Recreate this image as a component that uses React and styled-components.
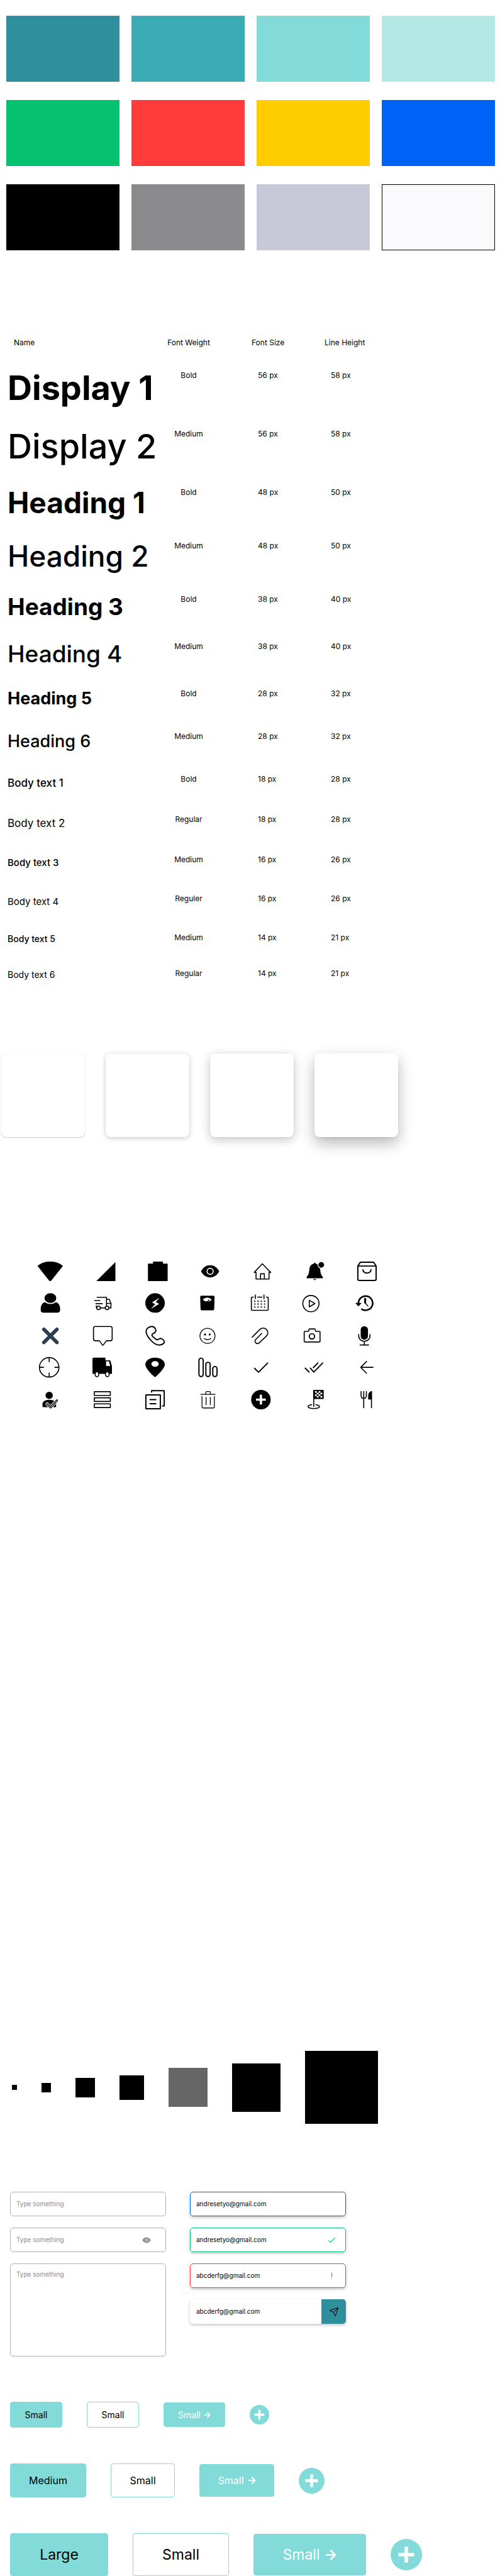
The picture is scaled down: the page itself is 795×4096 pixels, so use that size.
import React from "react";
import styled, { createGlobalStyle, css } from "styled-components";
import { Send } from "lucide-react";

const GlobalStyle = createGlobalStyle`
  *, *::before, *::after { box-sizing: border-box; }
  body {
    margin: 0;
    background: #fff;
    color: #000;
    font-family: Inter, "Liberation Sans", sans-serif;
  }
`;

const color = {
  teal: "#2f8f9d",
  mint: "#82dbd8",
  green: "#06c270",
  red: "#ff3b3b",
  blue: "#0063f7",
  grey: "#8a8a8d",
};

/* Palette */

const Palette = styled.section`
  display: grid;
  grid-template-columns: repeat(4, 1fr);
  gap: 29px 19px;
  padding: 25px 8px 0 10px;
`;

const Swatch = styled.div`
  height: 105px;
  background: ${(p) => p.$color};
  border: ${(p) => (p.$outlined ? "1px solid #000" : "none")};
`;

const swatches = [
  "#2f8f9d", "#3bacb6", "#82dbd8", "#b3e8e5",
  "#06c270", "#ff3b3b", "#ffcc00", "#0063f7",
  "#000000", "#8a8a8d", "#c7c9d9", "#fafafc",
];

/* Typography */

const TypeTable = styled.table`
  width: 100%;
  margin-top: 139px;
  table-layout: fixed;
  border-collapse: collapse;
  font-size: 12px;
  line-height: 16px;
`;

const Column = styled.col`
  width: ${(p) => p.$width}px;
`;

const TypeRow = styled.tr`
  height: ${(p) => p.$height}px;
`;

const HeadCell = styled.th`
  padding: 0 0 0 ${(p) => (p.$first ? 22 : 0)}px;
  font-weight: 400;
  text-align: ${(p) => (p.$center ? "center" : "left")};
  vertical-align: top;
`;

const NameCell = styled.th`
  padding: 0 0 0 12px;
  font-size: ${(p) => p.$size}px;
  line-height: ${(p) => p.$line}px;
  font-weight: ${(p) => p.$weight};
  text-align: left;
  vertical-align: top;
  white-space: nowrap;
`;

const Cell = styled.td`
  padding: 0 0 0 ${(p) => (p.$center ? 0 : 10)}px;
  text-align: ${(p) => (p.$center ? "center" : "left")};
  vertical-align: top;
`;

const styles = [
  { name: "Display 1", label: "Bold", px: 56, lh: 58, weight: 700, size: 54, line: 56, row: 93 },
  { name: "Display 2", label: "Medium", px: 56, lh: 58, weight: 500, size: 54, line: 56, row: 93 },
  { name: "Heading 1", label: "Bold", px: 48, lh: 50, weight: 700, size: 46, line: 48, row: 85 },
  { name: "Heading 2", label: "Medium", px: 48, lh: 50, weight: 500, size: 46, line: 48, row: 85 },
  { name: "Heading 3", label: "Bold", px: 38, lh: 40, weight: 700, size: 37, line: 39, row: 75 },
  { name: "Heading 4", label: "Medium", px: 38, lh: 40, weight: 500, size: 37, line: 39, row: 75 },
  { name: "Heading 5", label: "Bold", px: 28, lh: 32, weight: 700, size: 27, line: 31, row: 68 },
  { name: "Heading 6", label: "Medium", px: 28, lh: 32, weight: 500, size: 27, line: 31, row: 68 },
  { name: "Body text 1", label: "Bold", px: 18, lh: 28, weight: 500, size: 17, line: 28, row: 64 },
  { name: "Body text 2", label: "Regular", px: 18, lh: 28, weight: 400, size: 17, line: 28, row: 64 },
  { name: "Body text 3", label: "Medium", px: 16, lh: 26, weight: 500, size: 15, line: 26, row: 62 },
  { name: "Body text 4", label: "Reguler", px: 16, lh: 26, weight: 400, size: 15, line: 26, row: 62 },
  { name: "Body text 5", label: "Medium", px: 14, lh: 21, weight: 500, size: 14, line: 20, row: 57 },
  { name: "Body text 6", label: "Regular", px: 14, lh: 21, weight: 400, size: 14, line: 20, row: 57 },
];

/* Elevation */

const Elevations = styled.section`
  display: flex;
  gap: 33px;
  margin-top: 78px;
  padding-left: 2px;
`;

const ElevationCard = styled.div`
  width: 133px;
  height: 133px;
  border-radius: 8px;
  background: #fff;
  box-shadow: ${(p) => p.$shadow};
`;

const shadows = [
  "0 0 1px rgba(0,0,0,.12), 0 1px 2px rgba(0,0,0,.2)",
  "0 0 2px rgba(0,0,0,.08), 0 2px 8px rgba(0,0,0,.2)",
  "0 0 2px rgba(0,0,0,.08), 0 4px 16px rgba(0,0,0,.24)",
  "0 2px 4px rgba(0,0,0,.06), 0 10px 24px rgba(0,0,0,.28)",
];

/* Icons */

const IconGrid = styled.section`
  display: grid;
  grid-template-columns: repeat(7, 31px);
  gap: 20px 53px;
  margin-top: 198px;
  padding-left: 64px;
`;

const Glyph = styled.svg.attrs((p) => ({
  viewBox: p.viewBox || "0 0 96 96",
  fill: "none",
  stroke: "currentColor",
  strokeLinecap: "round",
  strokeLinejoin: "round",
  "aria-hidden": true,
}))`
  display: block;
  width: 31px;
  height: 31px;
  overflow: visible;
  stroke-width: 5;

  .solid { fill: currentColor; stroke: none; }
  .hole { fill: #fff; stroke: none; }
`;

const checker = [
  [52, 6], [70, 6], [61, 14], [79, 14], [52, 22], [70, 22], [61, 30], [79, 30],
];

const eye = (
  <>
    <path className="solid" d="M11 48C22 28 38 18 56 18S90 28 101 48C90 68 74 78 56 78S22 68 11 48Z" />
    <circle cx="56" cy="48" r="15" stroke="#fff" />
  </>
);

const icons = [
  <path className="solid" d="M-11 25Q-15 22 -11 19C5 6 27 0 49 0S93 6 109 19Q113 22 109 25L55 93Q49 99 43 93Z" />,
  <path className="solid" d="M16 96H110V2Z" />,
  <path className="solid" d="M10 10H35V0H84V10H107V96H10Z" />,
  eye,
  <path d="M22 86V53H13L53 11L94 53H86V86ZM44 86V60H63V86" />,
  <>
    <path className="solid" d="M51 5Q55 5 55 10C70 13 78 26 78 42C79 57 82 67 91 76V82H11V76C20 67 23 57 24 42C24 26 32 13 47 10Q47 5 51 5ZM44 86H58Q57 91 51 91T44 86Z" />
    <circle className="hole" cx="83" cy="16" r="18" />
    <circle className="solid" cx="83" cy="16" r="14" />
  </>,
  <path strokeWidth="6" d="M3 22L14 5Q15 3 18 3H78Q81 3 82 5L93 22V86Q93 93 86 93H10Q3 93 3 86ZM3 22H93M28 40C31 62 65 62 68 40" />,

  <>
    <ellipse className="solid" cx="50" cy="22" rx="29" ry="24" />
    <path className="solid" d="M22 42Q34 51 50 51T78 42Q98 48 98 78Q98 94 84 94H16Q2 94 2 78Q2 48 22 42Z" />
  </>,
  <>
    <path strokeLinecap="butt" d="M18 18H66V60M6 34H35M12 49H47M66 28H80L88 48V70H79M66 48H88M36 70H60M16 58V70" />
    <circle cx="27" cy="70" r="9" />
    <circle cx="69" cy="70" r="9" />
  </>,
  <>
    <circle className="solid" cx="45" cy="46" r="48" />
    <path className="hole" d="M66 20L30 43L46 52L24 76L65 50L49 41Z" />
  </>,
  <>
    <path className="solid" d="M13 10H72Q78 10 78 16L76 76Q76 82 70 82H15Q9 82 9 76L7 16Q7 10 13 10Z" />
    <path className="hole" d="M20 29Q42 10 64 29Q58 37 52 38H32Q26 37 20 29Z" />
    <path strokeWidth="4" d="M42 40L52 30" />
  </>,
  <>
    <path strokeLinecap="butt" d="M11 17H2Q-1 17 -1 20V78Q-1 82 3 82H78Q82 82 82 78V20Q82 17 79 17H71M28 17H53M19 5V26M61 5V26" />
    <path strokeWidth="6" strokeLinecap="butt" strokeDasharray="6 10" d="M13 37H70M13 51H70M13 66H70" />
  </>,
  <>
    <circle cx="32" cy="49" r="40" />
    <path d="M24 33V65L52 49Z" />
  </>,
  <>
    <path strokeWidth="8" strokeLinecap="butt" d="M6 48A35 35 0 1 1 20 75" />
    <path className="solid" d="M-10 46H22L6 63Z" />
    <path strokeWidth="10" strokeLinecap="butt" d="M39 22V48" />
    <path strokeWidth="4" d="M41 48L53 61" />
  </>,

  <path stroke="#2d3e4e" strokeWidth="18" d="M18 18L82 82M82 18L18 82" />,
  <path d="M11 4H85Q94 4 94 13V65Q94 74 85 74H69Q65 74 63 77L51 94Q48 98 45 94L34 77Q32 74 28 74H11Q2 74 2 65V13Q2 4 11 4Z" />,
  <path strokeWidth="6" d="M30 4C16 4 -1 14 1 30C4 56 40 96 66 95C80 95 92 86 91 78C88 68 74 60 66 64Q56 72 50 67Q36 58 30 48Q28 42 36 38C48 34 52 24 46 14C42 7 38 4 30 4Z" />,
  <>
    <circle strokeWidth="4" cx="43" cy="50" r="37" />
    <circle className="solid" cx="31" cy="43" r="5" />
    <circle className="solid" cx="54" cy="43" r="5" />
    <path strokeWidth="4" d="M26 63Q43 75 60 63" />
  </>,
  <path d="M3 56L41 18A23 23 0 0 1 74 50L38 84A12 12 0 0 1 20 68L50 38" />,
  <>
    <path d="M3 28H18Q22 28 22 24V20Q22 16 26 16H50Q54 16 54 20V24Q54 28 58 28H73Q77 28 77 32V76Q77 80 73 80H3Q-1 80 -1 76V32Q-1 28 3 28Z" />
    <circle strokeWidth="6" cx="37" cy="52" r="13" />
  </>,
  <>
    <rect className="solid" x="17" y="2" width="36" height="67" rx="18" />
    <path d="M7 43V48C7 86 63 86 63 48V43M35 78V95M14 95H56" />
  </>,

  <>
    <circle cx="44" cy="47" r="48" />
    <path strokeLinecap="butt" d="M44 -1V21M44 73V95M-4 47H18M70 47H92" />
  </>,
  <>
    <path className="solid" d="M2 -1H61V12H82Q85 12 86 16L93 42V79H-3V4Q-3 -1 2 -1Z" />
    <path className="hole" d="M64 17H78L84 40H64Z" />
    <ellipse fill="#fff" cx="19" cy="81" rx="9" ry="12" />
    <ellipse fill="#fff" cx="70" cy="81" rx="9" ry="12" />
  </>,
  <>
    <path className="solid" d="M45 95C38 92 -3 52 -3 33C-3 13 19 -1 45 -1S93 13 93 33C93 52 52 92 45 95Z" />
    <ellipse className="hole" cx="45" cy="30" rx="18" ry="14" />
  </>,
  <>
    <rect strokeWidth="6" x="1" y="2" width="21" height="90" rx="10" />
    <rect strokeWidth="6" x="35" y="22" width="21" height="70" rx="10" />
    <rect strokeWidth="6" x="69" y="43" width="21" height="49" rx="10" />
  </>,
  <path strokeWidth="6" d="M15 52L34 71L79 26" />,
  <path strokeWidth="6" d="M4 51L23 70M29 51L46 70L90 26M44 48L66 26" />,
  <path d="M78 47H18M46 18L17 47L46 76" />,

  <>
    <circle className="solid" cx="44" cy="27" r="18" />
    <path className="solid" d="M11 80V70Q13 49 44 49T78 68V85H16Q11 85 11 80Z" />
    <path stroke="#fff" strokeWidth="16" d="M34 70L51 86L82 52" />
    <path strokeWidth="10" d="M34 70L51 86L82 52" />
    <path stroke="#fff" strokeWidth="3" d="M34 70L51 86L82 52" />
  </>,
  <path d="M6 9H85V27H6ZM6 39H85V57H6ZM6 69H85V87H6Z" />,
  <path strokeWidth="6" strokeLinecap="butt" d="M0 25H71V93H0ZM28 13V4H90V79H79M18 48H51M18 68H51" />,
  <path strokeWidth="4" d="M10 22H81M35 20V12Q35 8 39 8H53Q57 8 57 12V20M16 32V84Q16 89 22 89H71Q77 89 77 84V32M36 37V73M57 37V73" />,
  <>
    <circle className="solid" cx="46" cy="48" r="48" />
    <path stroke="#fff" strokeWidth="11" strokeLinecap="butt" d="M46 24V72M22 48H70" />
  </>,
  <>
    <path d="M46 3V82M36 73C4 78 18 92 46 92S88 78 56 73" />
    <rect className="solid" x="44" y="0" width="51" height="45" rx="2" />
    {checker.map(([x, y]) => (
      <rect key={`${x}-${y}`} className="hole" x={x} y={y} width="9" height="8" />
    ))}
  </>,
  <>
    <path strokeLinecap="butt" d="M19 6V28Q19 42 32 42T45 28V6M32 6V90M70 6V90" />
    <path className="solid" d="M72 6Q54 8 54 30V47H72Z" />
  </>,
];

/* Spacing */

const Spacing = styled.section`
  display: flex;
  align-items: center;
  gap: 39px;
  margin-top: 1020px;
  padding-left: 19px;
`;

const SpacingBlock = styled.div`
  width: ${(p) => p.$size}px;
  height: ${(p) => p.$size}px;
  background: ${(p) => (p.$muted ? "#666" : "#000")};
`;

/* Fields */

const Fields = styled.form`
  display: grid;
  grid-template-columns: 248px 248px;
  gap: 38px;
  align-items: start;
  margin-top: 108px;
  padding-left: 16px;
`;

const FieldColumn = styled.div`
  display: flex;
  flex-direction: column;
  gap: 18px;
`;

const Field = styled.div`
  display: flex;
  align-items: center;
  height: 39px;
  overflow: hidden;
  border: ${(p) => (p.$line ? `1px solid ${p.$line}` : "none")};
  border-radius: 5px;
  padding-left: ${(p) => (p.$line ? 9 : 10)}px;
  padding-right: ${(p) => p.$end || 0}px;
  color: ${(p) => p.$line};
  box-shadow: ${(p) => (p.$raised ? "0 2px 4px rgba(0,0,0,.24)" : "none")};
`;

const fieldText = css`
  font: 400 10px/15px Inter, "Liberation Sans", sans-serif;
  color: #000;
  outline: none;
  &::placeholder { color: ${color.grey}; opacity: 1; }
`;

const TextInput = styled.input`
  ${fieldText}
  flex: 1;
  min-width: 0;
  padding: 0;
  border: 0;
  background: none;
`;

const TextArea = styled.textarea`
  ${fieldText}
  display: block;
  width: 100%;
  height: 148px;
  padding: 9px;
  border: 1px solid #b0b0b2;
  border-radius: 5px;
  background: none;
  resize: none;
`;

const FieldIcon = styled(Glyph)`
  flex: none;
  width: ${(p) => p.$w}px;
  height: 14px;
`;

const SendButton = styled.button`
  display: flex;
  align-items: center;
  justify-content: center;
  width: 39px;
  height: 39px;
  padding: 0;
  border: 0;
  background: ${color.teal};
  color: #000;
`;

/* Buttons */

const Buttons = styled.section`
  display: flex;
  flex-direction: column;
  gap: 57px;
  margin-top: 72px;
  padding-left: 16px;
`;

const ButtonRow = styled.div`
  display: flex;
  align-items: center;
  gap: 39px;
`;

const Button = styled.button`
  display: flex;
  align-items: center;
  justify-content: center;
  gap: ${(p) => p.$gap || 0}px;
  width: ${(p) => p.$width}px;
  height: ${(p) => p.$height}px;
  padding: 0;
  border: 1px solid ${color.mint};
  border-radius: 4px;
  background: ${(p) => (p.$outlined ? "#fff" : color.mint)};
  color: ${(p) => (p.$light ? "#fff" : "#000")};
  font: 400 ${(p) => p.$font}px/1 Inter, "Liberation Sans", sans-serif;
`;

const RoundButton = styled.button`
  display: block;
  width: ${(p) => p.$size}px;
  height: ${(p) => p.$size}px;
  padding: 0;
  border: 0;
  border-radius: 50%;
  background: ${color.mint};
  color: #fff;
`;

const ButtonGlyph = styled.svg`
  display: block;
  width: ${(p) => (p.$size ? `${p.$size}px` : "100%")};
  height: ${(p) => (p.$size ? `${p.$size}px` : "100%")};
`;

const buttonSizes = [
  { label: "Small", font: 14, height: 41, widths: [83, 83, 98], arrow: 10, gap: 6, round: 31 },
  { label: "Medium", font: 16, height: 54, widths: [121, 102, 119], arrow: 12, gap: 7, round: 41 },
  { label: "Large", font: 23, height: 68, widths: [156, 153, 179], arrow: 17, gap: 10, round: 50 },
];

export default function App() {
  return (
    <main>
      <GlobalStyle />

      <Palette>
        {swatches.map((c, i) => (
          <Swatch key={c} $color={c} $outlined={i === swatches.length - 1} />
        ))}
      </Palette>

      <TypeTable>
        <colgroup>
          <Column $width={258} />
          <Column $width={84} />
          <Column $width={58} />
          <Column $width={116} />
          <col />
        </colgroup>
        <thead>
          <TypeRow $height={52}>
            <HeadCell scope="col" $first>Name</HeadCell>
            <HeadCell scope="col" $center>Font Weight</HeadCell>
            <td />
            <HeadCell scope="col">Font Size</HeadCell>
            <HeadCell scope="col">Line Height</HeadCell>
          </TypeRow>
        </thead>
        <tbody>
          {styles.map((s) => (
            <TypeRow key={s.name} $height={s.row}>
              <NameCell scope="row" $size={s.size} $line={s.line} $weight={s.weight}>{s.name}</NameCell>
              <Cell $center>{s.label}</Cell>
              <td />
              <Cell>{s.px} px</Cell>
              <Cell>{s.lh} px</Cell>
            </TypeRow>
          ))}
        </tbody>
      </TypeTable>

      <Elevations>
        {shadows.map((s) => <ElevationCard key={s} $shadow={s} />)}
      </Elevations>

      <IconGrid>
        {icons.map((art, i) => <Glyph key={i}>{art}</Glyph>)}
      </IconGrid>

      <Spacing>
        {[8, 15, 31, 39, 62, 77, 116].map((n) => (
          <SpacingBlock key={n} $size={n} $muted={n === 62} />
        ))}
      </Spacing>

      <Fields onSubmit={(e) => e.preventDefault()}>
        <FieldColumn>
          <Field $line="#b0b0b2">
            <TextInput aria-label="Text" placeholder="Type something" />
          </Field>
          <Field $line="#b0b0b2" $end={23}>
            <TextInput aria-label="Hidden text" placeholder="Type something" />
            <FieldIcon $w={14} viewBox="9 3 94 90" color={color.grey}>{eye}</FieldIcon>
          </Field>
          <TextArea aria-label="Message" placeholder="Type something" />
        </FieldColumn>
        <FieldColumn>
          <Field $line={color.blue} $raised>
            <TextInput aria-label="Focused email" defaultValue="andresetyo@gmail.com" />
          </Field>
          <Field $line={color.green} $raised $end={16}>
            <TextInput aria-label="Valid email" defaultValue="andresetyo@gmail.com" />
            <FieldIcon $w={11} viewBox="10 3 74 90"><path strokeWidth="7" d="M14 52L34 71L80 25" /></FieldIcon>
          </Field>
          <Field $line={color.red} $raised $end={16}>
            <TextInput aria-label="Invalid email" defaultValue="abcderfg@gmail.com" />
            <FieldIcon $w={11} viewBox="0 0 11 14">
              <path strokeWidth="1.2" d="M5.500 2V8.500M5.500 11.500V11.700" />
            </FieldIcon>
          </Field>
          <Field $raised>
            <TextInput aria-label="Email" defaultValue="abcderfg@gmail.com" />
            <SendButton type="submit" aria-label="Send"><Send size={16} strokeWidth={1.5} /></SendButton>
          </Field>
        </FieldColumn>
      </Fields>

      <Buttons>
        {buttonSizes.map((b) => (
          <ButtonRow key={b.label}>
            <Button $font={b.font} $height={b.height} $width={b.widths[0]}>{b.label}</Button>
            <Button $font={b.font} $height={b.height} $width={b.widths[1]} $outlined>Small</Button>
            <Button $font={b.font} $height={b.height - 2} $width={b.widths[2]} $gap={b.gap} $light>
              Small
              <ButtonGlyph $size={b.arrow} viewBox="0 0 16 16" fill="none" stroke="currentColor" strokeWidth="2.500" aria-hidden>
                <path d="M0 8H14M7 1L14 8L7 15" />
              </ButtonGlyph>
            </Button>
            <RoundButton $size={b.round} aria-label="Add">
              <ButtonGlyph viewBox="0 0 32 32" stroke="currentColor" strokeWidth="3.600" aria-hidden>
                <path d="M16 8V24M8 16H24" />
              </ButtonGlyph>
            </RoundButton>
          </ButtonRow>
        ))}
      </Buttons>
    </main>
  );
}
